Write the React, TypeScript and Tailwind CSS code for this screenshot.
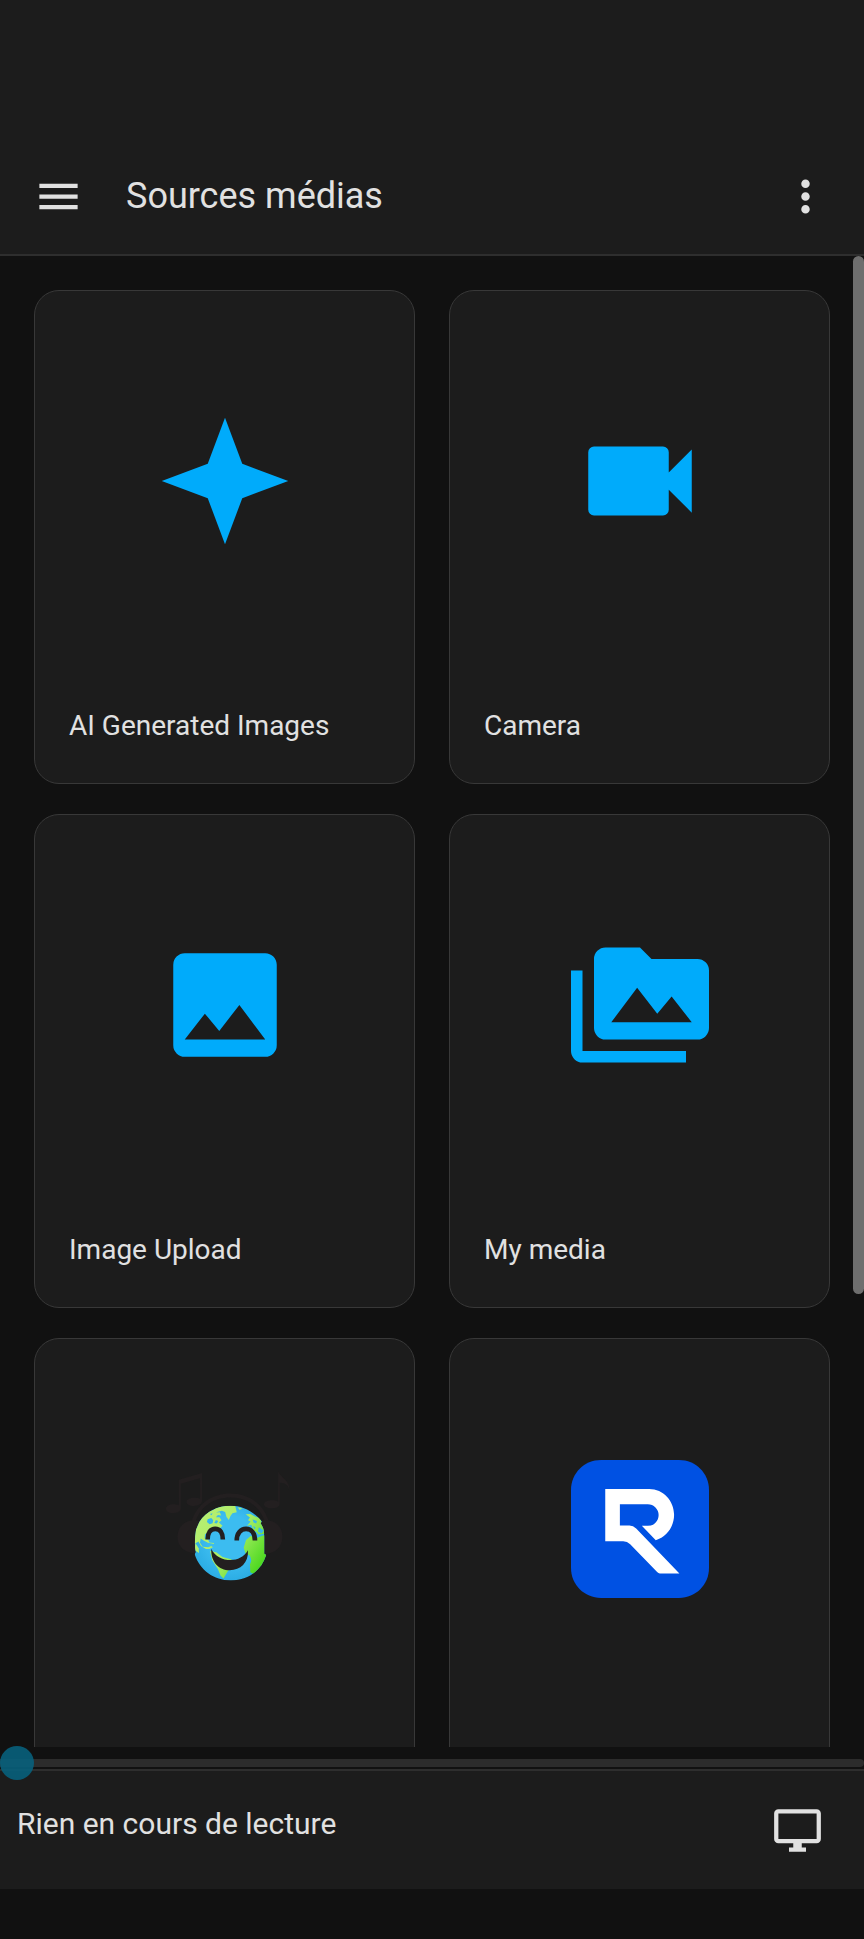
import type { ReactNode } from "react";

function MdiIcon({ path, className }: { path: string; className: string }) {
  return (
    <svg viewBox="0 0 24 24" className={className} fill="currentColor" aria-hidden="true">
      <path d={path} />
    </svg>
  );
}

const icons = {
  menu: "M3,6H21V8H3V6M3,11H21V13H3V11M3,16H21V18H3V16Z",
  dots: "M12,16A2,2 0 0,1 14,18A2,2 0 0,1 12,20A2,2 0 0,1 10,18A2,2 0 0,1 12,16M12,10A2,2 0 0,1 14,12A2,2 0 0,1 12,14A2,2 0 0,1 10,12A2,2 0 0,1 12,10M12,4A2,2 0 0,1 14,6A2,2 0 0,1 12,8A2,2 0 0,1 10,6A2,2 0 0,1 12,4Z",
  star: "M12,1L9,9L1,12L9,15L12,23L15,15L23,12L15,9L12,1Z",
  video:
    "M17,10.5V7A1,1 0 0,0 16,6H4A1,1 0 0,0 3,7V17A1,1 0 0,0 4,18H16A1,1 0 0,0 17,17V13.5L21,17.5V6.5L17,10.5Z",
  image:
    "M8.5,13.5L11,16.5L14.5,12L19,18H5M21,19V5C21,3.89 20.1,3 19,3H5A2,2 0 0,0 3,5V19A2,2 0 0,0 5,21H19A2,2 0 0,0 21,19Z",
  folderImages:
    "M7,15L11.5,9L15,13.5L17.5,10.5L21,15M22,4H14L12,2H6A2,2 0 0,0 4,4V16A2,2 0 0,0 6,18H22A2,2 0 0,0 24,16V6A2,2 0 0,0 22,4M2,6H0V11H0V20A2,2 0 0,0 2,22H20V20H2V6Z",
  monitor:
    "M21,16H3V4H21M21,2H3C1.89,2 1,2.89 1,4V16A2,2 0 0,0 3,18H10V20H8V22H16V20H14V18H21A2,2 0 0,0 23,16V4C23,2.89 22.1,2 21,2Z",
};

function RadioGlobe() {
  return (
    <svg viewBox="15 27 417 417" className="size-[138px]" aria-hidden="true">
      <defs>
        <radialGradient id="sea" cx="0.5" cy="0.45" r="0.6">
          <stop offset="0.5" stopColor="#3cbcf0" />
          <stop offset="1" stopColor="#27a9e1" />
        </radialGradient>
        <linearGradient id="land" x1="140" y1="190" x2="340" y2="330" gradientUnits="userSpaceOnUse">
          <stop offset="0" stopColor="#b9ef72" />
          <stop offset="0.55" stopColor="#aaee66" />
          <stop offset="1" stopColor="#4fd921" />
        </linearGradient>
        <clipPath id="disc">
          <path d="M240 165C276 165 309 181 335 213L331 218C340 232 342 240 342 260V310L348 314C333 362 292 391 241 391C190 391 147 360 132 312L135 306C131 284 132 262 136 238L146 214C168 180 202 165 240 165Z" />
        </clipPath>
      </defs>
      <g fill="#231f20">
        <path d="M84 87L154 66V152C154 160 143 166 129 166C115 166 107 160 107 153C107 146 118 141 131 141C138 141 144 142 148 144V82L90 99V174C90 182 79 187 65 187C52 187 45 181 45 174C45 167 54 161 67 161C74 161 80 162 84 164Z" />
        <path d="M384 60C390 80 420 86 418 119C414 98 398 96 389 96V160C389 168 378 173 363 173C349 173 341 168 341 161C341 154 351 149 365 149C373 149 380 150 384 153Z" />
        <path d="M122 214C138 160 184 128 240 128C296 128 340 160 356 212L344 214C328 166 290 140 240 140C190 140 150 166 134 214Z" />
        <path d="M146 212L134 208C100 208 80 230 80 259C80 289 101 308 136 310Z" />
        <path d="M332 212L342 208C377 208 397 229 397 259C397 289 377 309 342 312Z" />
      </g>
      <g clipPath="url(#disc)">
        <rect x="130" y="160" width="222" height="235" fill="url(#sea)" />
        <g fill="url(#land)">
          <path d="M125 285V215L158 194L172 182L190 178L200 179L193 186L208 185L212 195L202 193L196 200L207 200L213 209L205 216L216 226L208 233L191 229L180 241L163 251L162 264L173 268L176 276L190 278L190 281L172 277L159 270L150 264L148 277L156 289L173 291L182 287L187 291L176 296L166 296L151 287L143 273Z" />
          <path d="M180 186L195 172L220 164H254L259 185L246 188L240 196L235 208L228 199L224 184L214 180L200 184L190 194Z" />
          <path d="M178 302L197 306L216 320L242 327L252 337L239 354L231 365L219 385L210 376L202 356L185 330Z" />
          <path d="M287 269L301 257L319 263L345 253V313L317 312L303 337V330L299 316L285 308L280 292Z" />
          <path d="M300 309L352 311L335 348L312 372L300 366L299 342L305 327Z" />
          <path d="M286 191L300 190L314 198L330 203L334 216L344 225V250L325 252L318 244L309 240L303 223L290 226L301 213L293 209L299 201Z" />
          <path d="M262 170L277 174L267 177Z" />
          <path d="M134 278L144 294L145 308L132 300Z" />
        </g>
        <g fill="#37b6ec">
          <path d="M171 206L182 202L188 209L186 218L177 221L169 214Z" />
          <path d="M196 208L203 211L199 219L191 217Z" />
          <path d="M178 190L186 188L183 194Z" />
          <path d="M307 207L320 211L318 219L310 216Z" />
          <path d="M326 230L340 240L334 249L323 243Z" />
          <path d="M308 226L316 231L313 237Z" />
        </g>
      </g>
      <g fill="none" stroke="#231f20" strokeWidth="14">
        <path d="M171 267C171 247 180 235 194 235C208 235 217 247 217 267" />
        <path d="M259 270C259 248 271 235 287 235C303 235 314 248 314 270" />
      </g>
      <path d="M182 295C202 338 270 342 293 300C295 338 270 360 238 360C205 360 180 335 182 295Z" fill="#231f20" />
    </svg>
  );
}

function RLogo() {
  return (
    <svg viewBox="62 58 415 415" className="size-[138px]" aria-hidden="true">
      <path
        d="M152 58H387C437 58 477 98 477 148V383C477 433 437 473 387 473H152C102 473 62 433 62 383V148C62 98 102 58 152 58Z"
        fill="#0051e3"
      />
      <path
        d="M165 145H297C340 145 372 181 372 223C372 258 350 289 317 299L275 256H293A32.500 32.500 0 0 0 293 191H209V255H238Q249 255 258 264L388 399H329Q325 399 321 395L240 311Q231 302 219 302H165Z"
        fill="#fff"
      />
    </svg>
  );
}

const sources: { id: string; title?: string; art: ReactNode }[] = [
  { id: "ai", title: "AI Generated Images", art: <MdiIcon path={icons.star} className="size-[138px]" /> },
  { id: "camera", title: "Camera", art: <MdiIcon path={icons.video} className="size-[138px]" /> },
  { id: "upload", title: "Image Upload", art: <MdiIcon path={icons.image} className="size-[138px]" /> },
  { id: "media", title: "My media", art: <MdiIcon path={icons.folderImages} className="size-[138px]" /> },
  { id: "radio", art: <RadioGlobe /> },
  { id: "recordings", art: <RLogo /> },
];

export default function App() {
  return (
    <div className="flex h-screen flex-col bg-[#111111] font-[Roboto,sans-serif] text-[#e1e1e1]">
      <header className="shrink-0 border-b-2 border-[#2e2e2e] bg-[#1c1c1c] pt-[138px]">
        <div className="flex h-[116px] items-center px-[33px]">
          <button type="button" aria-label="Menu">
            <MdiIcon path={icons.menu} className="size-[51px]" />
          </button>
          <h1 className="ml-[42px] flex-1 text-[36px] leading-[44px]">Sources médias</h1>
          <button type="button" aria-label="Options">
            <MdiIcon path={icons.dots} className="size-[51px]" />
          </button>
        </div>
      </header>

      <main className="relative min-h-0 flex-1 overflow-hidden">
        <div className="grid grid-cols-2 gap-x-[34px] gap-y-[30px] p-[34px]">
          {sources.map((source) => (
            <a
              key={source.id}
              href={`#${source.id}`}
              aria-label={source.title ?? source.id}
              className="flex flex-col rounded-[25px] border border-[#383838] bg-[#1c1c1c]"
            >
              <span className="flex aspect-square items-center justify-center text-[#00abfb]">
                {source.art}
              </span>
              <span className="h-[113px] truncate px-[34px] pt-[36px] text-[28px] leading-[40px]">
                {source.title}
              </span>
            </a>
          ))}
        </div>
        <div className="absolute top-0 right-0 h-[69.6%] w-[11px] rounded-full bg-[#6e6e6e]" />
      </main>

      <footer className="shrink-0 pb-[50px]">
        <div className="relative z-10 -mb-[12px] flex h-[34px] items-center">
          <input
            type="range"
            aria-label="Position"
            min={0}
            max={100}
            defaultValue={0}
            className="mb-[2px] h-[8px] w-full appearance-none rounded-r-full bg-[#2c2c2c] [&::-webkit-slider-thumb]:size-[34px] [&::-webkit-slider-thumb]:appearance-none [&::-webkit-slider-thumb]:rounded-full [&::-webkit-slider-thumb]:bg-[#07627e]/88"
          />
        </div>
        <div className="flex h-[120px] items-center justify-between border-t-2 border-[#2e2e2e] bg-[#1c1c1c] pr-[41px] pl-[17px]">
          <p className="mb-3 text-[30px] leading-[40px]">Rien en cours de lecture</p>
          <button type="button" aria-label="Lecteur">
            <MdiIcon path={icons.monitor} className="size-[51px]" />
          </button>
        </div>
      </footer>
    </div>
  );
}
